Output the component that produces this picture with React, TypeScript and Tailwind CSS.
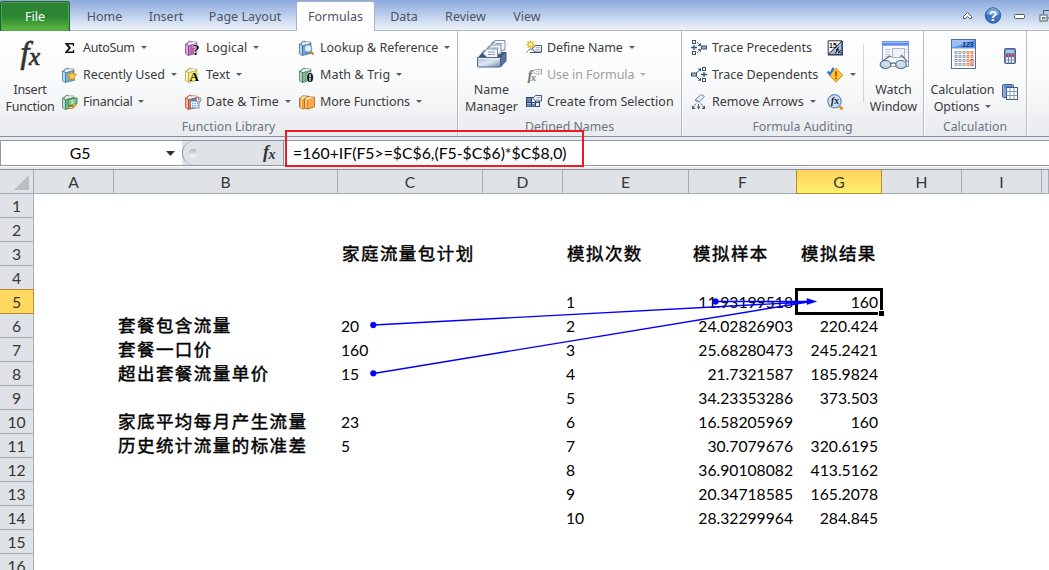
import React from "react";

type Kids = { children?: React.ReactNode };

function Svg({ children, w = 16, h = 16 }: Kids & { w?: number; h?: number }) {
  return (
    <svg width={w} height={h} viewBox={`0 0 ${w} ${h}`} className="shrink-0 overflow-visible">
      {children}
    </svg>
  );
}

function Caret({ dim }: { dim?: boolean }) {
  return (
    <svg width="6" height="3" viewBox="0 0 6 3" className="shrink-0">
      <path d="M0 0h6L3 3z" fill={dim ? "#b4b4b4" : "#5c5c5c"} />
    </svg>
  );
}

function Book({ main, light, dark, children }: Kids & { main: string; light: string; dark: string }) {
  return (
    <Svg>
      <path d="M.5 4 5 1.500 12 2v1.500L3.500 6z" fill="#f3f4f2" stroke={dark} strokeWidth=".5" />
      <path d="M.5 4l3 1.700v9.800l-3-1.800z" fill={light} stroke={dark} strokeWidth=".7" />
      <path d="M3.500 5.700 12 3.500v9.800l-8.500 2.200z" fill={main} stroke={dark} strokeWidth=".6" />
      <path d="M5 6v8.500" stroke={light} strokeWidth=".7" />
      <path d="M2.500 4.500C2.500 1.500 5.500-.3 6.500 2.500" fill="none" stroke={dark} strokeWidth=".7" />
      {children}
    </Svg>
  );
}

const SigmaIcon = () => (
  <Svg>
    <path d="M3 3h9v3h-.8l-.7-1.6H6.2L9 8l-3.2 3.6h4.8l.9-1.8h.7V13H3v-.8L6.5 8 3 3.8z" fill="#111" />
  </Svg>
);
const RecentIcon = () => (
  <Book main="#5ba6d2" light="#b9ddf0" dark="#2f6c96">
    <path d="m9.800 3.900 1.300 3.200 3.600.3-2.700 2.400.8 3.600-3-2-3 2 .8-3.600-2.700-2.400 3.600-.3z" fill="#ffd13b" stroke="#e0791f" strokeWidth=".8" />
  </Book>
);
const FinanceIcon = () => (
  <Book main="#5ba573" light="#b4dcbe" dark="#3c7650">
    <path d="m6 5.500 9-1.700v6L6.200 12z" fill="#7fc48f" stroke="#2f7748" strokeWidth=".8" />
    <path d="M11.500 6C9 5.600 9 7.500 10.500 7.800s1.400 2-1.200 1.800" stroke="#eaffea" fill="none" />
    <ellipse cx="12.300" cy="11" rx="2.400" ry="1" fill="#ffd55a" stroke="#a56b14" strokeWidth=".6" />
    <ellipse cx="9" cy="13.500" rx="2.700" ry="1.100" fill="#ffd55a" stroke="#a56b14" strokeWidth=".6" />
  </Book>
);
const LogicalIcon = () => (
  <Book main="#b45bb0" light="#dcaede" dark="#7c3a80">
    <text x="7.500" y="15" fontSize="14" className="font-['Liberation_Serif',serif] font-bold" fill="#000" stroke="#fff" strokeWidth="1" paintOrder="stroke">?</text>
  </Book>
);
const TextIcon = () => (
  <Book main="#f0e878" light="#fbf8b5" dark="#a89c2b">
    <text x="4.500" y="14" fontSize="13" className="font-['Liberation_Serif',serif] font-bold" fill="#000">A</text>
  </Book>
);
const DateIcon = () => (
  <Book main="#ec6239" light="#f9b497" dark="#a83d1f">
    <rect x="5.500" y="5.500" width="8.500" height="8.500" fill="#fff" stroke="#4a75b8" strokeWidth=".8" />
    <path d="M5.500 6.500H14" stroke="#4f83d1" strokeWidth="2" />
    <path d="M7 9.300h6.500M7 11.300h6.500M7 13h4.500" stroke="#5c86c9" strokeDasharray="1.400 1" />
    <circle cx="13.600" cy="5.600" r="2.500" fill="#f2f4f7" stroke="#616a76" strokeWidth=".8" />
    <path d="M13.600 4v1.800h1.200" stroke="#333" strokeWidth=".7" fill="none" />
  </Book>
);
const LookupIcon = () => (
  <Book main="#4e8fd0" light="#b7d5f1" dark="#2d629c">
    <path d="m11.500 11.500 3 3" stroke="#d38425" strokeWidth="2.400" />
    <circle cx="9" cy="8.500" r="3.700" fill="#d9f0ff" stroke="#8a98a8" strokeWidth="1.200" />
  </Book>
);
const MathIcon = () => (
  <Book main="#6aac86" light="#aed4be" dark="#3b6f52">
    <text x="7.500" y="14.500" fontSize="13.500" className="font-['Liberation_Serif',serif] font-bold" fill="#000" stroke="#fff" strokeWidth=".8" paintOrder="stroke">θ</text>
  </Book>
);
const MoreIcon = () => (
  <Svg>
    <path d="M.5 4.200 4 1.800l5.500.4V12L5 14.800H3.200L.5 13z" fill="#efa03d" stroke="#a8681a" strokeWidth=".8" />
    <path d="M1.300 4.300 3.900 2.400l4.400.2-3.500 2.200z" fill="#fff4df" />
    <path d="M2.500 5.200v9" stroke="#ffd8a0" />
    <path d="m5.500 4.700 3.700-2 6.300.5v9.500l-7 2.600-3-1.700z" fill="#f8a847" stroke="#a8681a" strokeWidth=".8" />
    <path d="m6.300 4.800 3-1.600 5.400.4-6.200 1.900z" fill="#fff4df" />
    <path d="M8.500 5.900V15" stroke="#c27a20" strokeWidth=".7" />
    <path d="M7 5.500v8.300" stroke="#ffd8a0" />
  </Svg>
);

const DefineIcon = () => (
  <Svg>
    <path d="M4.500.5v8M.5 4.500h8M1.600 1.600l5.800 5.800M7.400 1.600 1.600 7.400" stroke="#f0b400" strokeWidth="1.400" />
    <circle cx="4.500" cy="4.500" r="1.800" fill="#fffbd0" />
    <path d="M.5 12.500C4 8 4.500 9.500 7 9" fill="none" stroke="#52688b" />
    <path d="M9 5.500 6.500 8.500 9 12h6.500V5.500z" fill="#f5f8fc" stroke="#3f5a80" />
    <path d="M9.500 7.700h4.500M9.500 9.800h4.500" stroke="#8196b4" strokeWidth=".8" />
    <path d="M4 12.500h11" stroke="#3f5a80" />
  </Svg>
);
const UseIcon = () => (
  <Svg>
    <text x="1.500" y="12.500" fontSize="15" className="font-['Liberation_Serif',serif] font-bold italic" fill="#777">f</text>
    <text x="5" y="14" fontSize="10" className="font-['Liberation_Serif',serif] font-bold italic" fill="#777">x</text>
    <path d="M9.500 2.500 7 4.500 9.500 7H15.500V2.500z" fill="#fafafa" stroke="#a9a9a9" />
    <path d="M10 4.700h4.500" stroke="#b5b5b5" strokeWidth=".8" />
  </Svg>
);
const CreateIcon = () => (
  <Svg>
    <rect x=".5" y="3.500" width="13" height="9" fill="#e9f0fa" stroke="#2d476f" />
    <path d="M1 4h5v4H1zM1 9.500h4v3H1zM6 9.500h4v3H6z" fill="#6783b0" />
    <path d="M.5 8.500h13M5.500 3.500v9M9.500 3.500v9" stroke="#2d476f" />
    <path d="M9.500 1.500 7 4.300 9.500 7h6V1.500z" fill="#f5f8fc" stroke="#3f5a80" />
    <path d="M10.500 3.500h4M10.500 5.300h3" stroke="#8196b4" strokeWidth=".8" />
  </Svg>
);
const PrecedentsIcon = () => (
  <Svg>
    <g fill="#fff" stroke="#335279">
      <rect x="1.500" y=".5" width="3" height="3" />
      <rect x="1.500" y="11.500" width="3" height="3" />
      <rect x="10.500" y="6" width="5" height="3" fill="#9bb2cd" />
    </g>
    <path d="M0 7.500h6M3 5v5" stroke="#335279" strokeWidth="1.300" />
    <path d="m6 2 3 3M6 13l3-3" stroke="#333" strokeWidth=".9" strokeDasharray="2 .7" />
    <path d="M9.800 2.500v3.500H6.500zM9.800 12.500V9H6.500z" fill="#335279" />
  </Svg>
);
const DependentsIcon = () => (
  <Svg>
    <g fill="#fff" stroke="#335279">
      <rect x="11.500" y=".5" width="3" height="3" />
      <rect x="11.500" y="11.500" width="3" height="3" />
      <rect x=".5" y="6" width="5" height="3" fill="#9bb2cd" />
    </g>
    <path d="M10 7.500h6M13 5v5" stroke="#335279" strokeWidth="1.300" />
    <path d="m5.500 6 3-3M5.500 9.500l3 3" stroke="#333" strokeWidth=".9" />
    <path d="M6.800 1.500H10v3.300zM6.800 13.800H10v-3.300z" fill="#335279" />
  </Svg>
);
const RemoveIcon = () => (
  <Svg>
    <path d="m4 6 5.500-5Q12 .2 13.300 2.300L8.500 8Q6 8.500 4 6z" fill="#e8eef8" stroke="#6c80a8" strokeWidth=".9" />
    <path d="M4 6q2.500-.3 4.500 2" fill="none" stroke="#6c80a8" />
    <path d="m5 9.500-3 4M7.500 10v4M10 9.500l3 4" stroke="#3c5374" strokeWidth=".9" strokeDasharray="2 .6" />
    <path d="M1 11.500v3.500h3.500zM5.800 12.500h3.600l-1.800 3zM14 11.500v3.500h-3.500z" fill="#3c5374" />
  </Svg>
);
const ShowIcon = () => (
  <Svg>
    <rect x="1" y=".5" width="14" height="14" fill="#a8b7cb" />
    <path d="M1 .5h14L1 14.500z" fill="#fff" />
    <path d="M1.200 14.500V.8H15" stroke="#333" fill="none" />
    <path d="M1 14.800h15M15.200 1v14" stroke="#1e3f70" strokeWidth="1.500" />
    <path d="M15 1 1 14.500" stroke="#223" />
    <text x="2" y="7.500" fontSize="7" className="font-['Liberation_Sans',sans-serif] font-bold" fill="#111">15</text>
    <path d="M8 13.200q1.700.3 2.200-4 .4-1.800 1.500-1.500M9 9.800H12M11.300 10.500l2.400 2.800M13.900 10.500l-3 2.800" fill="none" stroke="#111" strokeWidth="1" />
  </Svg>
);
const ErrorIcon = () => (
  <Svg>
    <path d="m9 1.300 6.700 6.900L9 15.200 2.200 8.200z" fill="#ffc928" stroke="#c08410" strokeWidth=".9" />
    <path d="M9 4.300v5.200" stroke="#d8321e" strokeWidth="1.800" />
    <circle cx="9" cy="11.600" r="1" fill="#d8321e" />
    <path d="M.6 4.500 3 7.200 6.500.8" fill="none" stroke="#3c6fc4" strokeWidth="2.200" />
  </Svg>
);
const EvaluateIcon = () => (
  <Svg>
    <path d="m12.500 12.500 3 2.800" stroke="#e08a20" strokeWidth="2.600" />
    <circle cx="7.500" cy="7.300" r="6.600" fill="#c9e2fa" stroke="#6d8fc0" strokeWidth="1.300" />
    <text x="4" y="10.300" fontSize="9.500" className="font-['Liberation_Serif',serif] font-bold italic" fill="#111">fx</text>
  </Svg>
);

const ManagerIcon = () => (
  <Svg w={32} h={32}>
    <defs>
      <linearGradient id="drawer" x2="1" y2="1">
        <stop offset="0" stopColor="#a9bcd8" />
        <stop offset=".5" stopColor="#dfe7f2" />
        <stop offset="1" stopColor="#6f88ad" />
      </linearGradient>
    </defs>
    <path d="m1.500 19 5-6h23.500l-5.500 6z" fill="#3f5779" />
    <g fill="#f5f7fb" stroke="#71859f" strokeWidth=".9">
      <path d="M18.500 1.500H29V11l-9 1-4.500-5z" />
      <path d="M14.500 6H25v9H14.500L11 11z" />
      <path d="M11 10h10.500v8.500H11L7 14.500z" />
    </g>
    <path d="M19.500 4.500h7M15.500 9h7.500M12 13h7M12 15.500h7" stroke="#8a9bb1" />
    <path d="M19 3.500q-3-1.500-4 2M15 8q-3-2-4 2M10 12q-3-2-4 2" fill="none" stroke="#667c98" />
    <path d="M1.500 18.500h23V27q0 1-1 1h-21q-1 0-1-1z" fill="url(#drawer)" stroke="#4f688e" />
    <path d="m24.500 18.500 5.500-5.500v9l-5.500 6z" fill="#5c7499" stroke="#435d83" />
    <path d="M2.500 19.500h21" stroke="#e7eef8" />
  </Svg>
);
const WatchIcon = () => (
  <Svg w={32} h={32}>
    <rect x="4.500" y="2.500" width="26" height="25" fill="#fbfcfe" stroke="#8097c4" />
    <path d="M4.500 4.500h26" stroke="#5f8ff0" strokeWidth="4.500" />
    <path d="M5 3.500h25" stroke="#a7c4fb" />
    <path d="M7 10.500h5M7 13h5M7 15.500h5M7 18h5M27.500 10.500h2M27.500 13h2" stroke="#b3bfcf" />
    <rect x="14.500" y="9.500" width="12" height="9" fill="#eef1f7" stroke="#aab7cb" />
    <path d="m3.500 23 8-6 2 1M29.500 23 24 16.500l-2 1" fill="none" stroke="#65758c" strokeWidth="1.200" />
    <ellipse cx="7.500" cy="25.500" rx="5.300" ry="4" fill="#c4dae9" fillOpacity=".9" stroke="#566c84" strokeWidth="1.200" />
    <ellipse cx="23" cy="25.500" rx="5.300" ry="4" fill="#c4dae9" fillOpacity=".9" stroke="#566c84" strokeWidth="1.200" />
    <path d="M12.800 25q2.500-2.500 5 0" fill="none" stroke="#566c84" strokeWidth="1.200" />
  </Svg>
);
const dots = [0, 1, 2, 3];
const CalcIcon = () => (
  <Svg w={32} h={32}>
    <rect x="4.500" y=".5" width="24" height="29" fill="#fff" stroke="#4a70a8" />
    <path d="M5 1h23v8.500H5z" fill="#6397ec" />
    <path d="M5 1h23L5 8.500z" fill="#9cc0f6" />
    <text x="15" y="8" fontSize="7" className="font-['Liberation_Sans',sans-serif] font-bold italic" fill="#173463">123</text>
    {dots.map((r) =>
      dots.map((c) => (
        <rect key={`${r}${c}`} x={8 + c * 4} y={12.5 + r * 4} width="2" height="2" fill="#fff" stroke={c === 3 ? "#e77b3f" : "#8f9cb0"} strokeWidth=".9" />
      )),
    )}
    <rect x="24" y="12.500" width="2" height="2" fill="#fff" stroke="#e77b3f" strokeWidth=".9" />
    <rect x="24" y="16.500" width="2" height="2" fill="#fff" stroke="#e77b3f" strokeWidth=".9" />
    <rect x="24" y="20.500" width="2" height="6" fill="#fff" stroke="#cf3326" strokeWidth=".9" />
  </Svg>
);
const CalcNow = () => (
  <Svg>
    <rect x="2.500" y=".5" width="11" height="15" rx="1" fill="#7187ad" stroke="#4a628b" />
    <rect x="4" y="2" width="8" height="3" fill="#9fc3fb" />
    {dots.slice(0, 3).map((r) =>
      dots.slice(0, 3).map((c) => (
        <rect key={`${r}${c}`} x={4 + c * 3} y={6.5 + r * 3} width="2" height="2" fill={r === 0 ? "#d92f35" : "#fff"} />
      )),
    )}
  </Svg>
);
const CalcSheet = () => (
  <Svg>
    <rect x=".5" y=".5" width="11" height="13" rx="1" fill="#8fa7cd" stroke="#4a628b" />
    <path d="M2 2.500h8" stroke="#5085e0" strokeWidth="2" />
    <rect x="4.500" y="3.500" width="11" height="12" fill="#fff" stroke="#435b83" />
    <path d="M4.500 7.500h11M4.500 11.500h11M8 4v11.500M12 4v11.500" stroke="#8297b9" />
  </Svg>
);

const ui = "font-['Noto_Sans','Open_Sans',sans-serif]";

function Command({ icon, label, track = "", caret, dim }: { icon: React.ReactNode; label: string; track?: string; caret?: boolean; dim?: boolean }) {
  return (
    <div className={`flex h-[27px] items-center whitespace-nowrap ${dim ? "text-[#a0a0a0]" : ""}`}>
      {icon}
      <span className={`ml-[5px] pt-px ${track}`}>{label}</span>
      {caret && <span className="ml-1.5 flex"><Caret dim={dim} /></span>}
    </div>
  );
}

function Group({ label, width, children }: Kids & { label: string; width: string }) {
  return (
    <section className={`flex shrink-0 flex-col border-r border-[#b7bcc4] shadow-[1px_0_0_#fff] ${width}`}>
      <div className="flex h-[84px] pt-[3px]">{children}</div>
      <div className="flex h-[21px] items-center justify-center pt-[3px] text-[12.300px] text-[#6d7480]">{label}</div>
    </section>
  );
}

function BigButton({ icon, lines, width, caret, track = "" }: { icon: React.ReactNode; lines: string[]; width: string; caret?: boolean; track?: string }) {
  return (
    <div className={`flex shrink-0 flex-col items-center pt-[5px] ${width}`}>
      <div className="flex h-[42px] items-start">{icon}</div>
      <div className={`text-center leading-[17px] whitespace-nowrap ${track}`}>
        <div>{lines[0]}</div>
        <div className="flex items-center justify-center gap-1.5">{lines[1]}{caret && <Caret />}</div>
      </div>
    </div>
  );
}

const tabs = [
  { name: "Home", width: "w-[69px]" },
  { name: "Insert", width: "w-[54px]" },
  { name: "Page Layout", width: "w-[103px] pl-px" },
  { name: "Formulas", width: "w-[79px]", active: true },
  { name: "Data", width: "w-[58px]" },
  { name: "Review", width: "w-[65px]" },
  { name: "View", width: "w-[58px]" },
];

const gridCols = "grid grid-rows-[24px] grid-cols-[34px_80px_224px_145px_80px_126px_108px_85px_80px_80px_7px]";
const columns = ["A", "B", "C", "D", "E", "F", "G", "H", "I", ""];

type Row = { b?: string; c?: string; e?: string; f?: string; g?: string; heading?: boolean };
const rows: Row[] = [
  {},
  {},
  { c: "家庭流量包计划", e: "模拟次数", f: "模拟样本", g: "模拟结果", heading: true },
  {},
  { e: "1", f: "11.93199518", g: "160" },
  { b: "套餐包含流量", c: "20", e: "2", f: "24.02826903", g: "220.424" },
  { b: "套餐一口价", c: "160", e: "3", f: "25.68280473", g: "245.2421" },
  { b: "超出套餐流量单价", c: "15", e: "4", f: "21.7321587", g: "185.9824" },
  { e: "5", f: "34.23353286", g: "373.503" },
  { b: "家底平均每月产生流量", c: "23", e: "6", f: "16.58205969", g: "160" },
  { b: "历史统计流量的标准差", c: "5", e: "7", f: "30.7079676", g: "320.6195" },
  { e: "8", f: "36.90108082", g: "413.5162" },
  { e: "9", f: "20.34718585", g: "165.2078" },
  { e: "10", f: "28.32299964", g: "284.845" },
  {},
  {},
];

const cjk = "font-['Noto_Sans_CJK_SC',sans-serif] text-[17.500px] tracking-[1.450px] leading-[20px] [-webkit-text-stroke:0.450px_#000] pb-[3px] pl-1";

function Cell({ text, heading, right }: { text?: string; heading?: boolean; right?: boolean }) {
  return (
    <div className={`flex h-6 items-center whitespace-nowrap pr-1 ${right && !heading ? "justify-end" : ""} ${heading ? cjk : "pl-[3px] leading-[22px]"}`}>
      {text}
    </div>
  );
}

export default function App() {
  return (
    <div className={`relative flex h-[570px] w-[1049px] flex-col overflow-hidden bg-white text-[12.500px] text-[#3b3b3b] ${ui}`}>
      <header className="flex h-[31px] shrink-0 items-end bg-linear-to-b from-[#8aa9dc] via-[#bdd0ed] to-[#f3f6fb]">
        <div className="flex h-[30px] w-[70px] shrink-0 items-center justify-center rounded-t-[3px] border border-b-0 border-[#1b642b] bg-linear-to-b from-[#2d8236] via-[#2b8632] to-[#5dbb45] text-white shadow-[inset_0_0_0_1px_#51a34e]">
          <span className="pt-px">File</span>
        </div>
        <nav className="flex h-[30px] flex-1 items-stretch">
          {tabs.map((t) => (
            <div
              key={t.name}
              className={`flex shrink-0 items-center justify-center whitespace-nowrap text-[#4b5462] ${t.width} ${
                t.active ? "rounded-t-[3px] border border-b-0 border-[#a8b4c6] bg-white pt-[2px]" : "border-b border-[#adb5c2] pt-[4px]"
              }`}
            >
              {t.name}
            </div>
          ))}
          <div className="flex flex-1 items-center justify-end border-b border-[#adb5c2]">
            <svg width="88" height="20" viewBox="0 0 88 20" className="shrink-0">
              <path d="m2.500 10.500 4-4 4 4v2H8.700L6.500 10.400 4.300 12.500H2.500z" fill="#fff" stroke="#505a68" />
              <circle cx="32" cy="9.500" r="7.700" fill="#3f72c1" stroke="#2f5c9f" />
              <path d="M25.500 8a6.500 6 0 0 1 13 0q-6 3-13 0" fill="#72a0de" />
              <text x="27.800" y="14.500" fontSize="14" className="font-['Liberation_Sans',sans-serif] font-bold" fill="#fff">?</text>
              <rect x="53.500" y="8.500" width="10" height="4" rx="1" fill="#fff" stroke="#505a68" />
              <path d="M82.500 8V4.500H90V12h-3.500" fill="none" stroke="#505a68" />
              <rect x="79" y="9" width="7" height="6" fill="#fff" stroke="#505a68" />
              <rect x="81.500" y="11.500" width="2.500" height="1.500" fill="none" stroke="#505a68" strokeWidth=".8" />
            </svg>
          </div>
        </nav>
      </header>

      <div className="flex h-[106px] shrink-0 border-b border-[#8b9097] bg-linear-to-b from-white via-[#f9fafb] to-[#e8ebef]">
        <Group label="Function Library" width="w-[458px]">
          <BigButton
            width="w-[60px]"
            lines={["Insert", "Function"]}
            track="tracking-[-0.250px]"
            icon={
              <Svg w={32} h={32}>
                <text x="6.500" y="23.500" fontSize="32" className="font-['Liberation_Serif',serif] italic" fill="#333" stroke="#333" strokeWidth=".7">f</text>
                <text x="15" y="26" fontSize="25" className="font-['Liberation_Serif',serif] italic" fill="#333" stroke="#333" strokeWidth=".7">x</text>
              </Svg>
            }
          />
          <div className="ml-0.5 w-[123px]">
            <Command icon={<SigmaIcon />} label="AutoSum" track="tracking-[-0.350px]" caret />
            <Command icon={<RecentIcon />} label="Recently Used" track="tracking-[-0.080px]" caret />
            <Command icon={<FinanceIcon />} label="Financial" track="tracking-[-0.250px]" caret />
          </div>
          <div className="w-[114px]">
            <Command icon={<LogicalIcon />} label="Logical" caret />
            <Command icon={<TextIcon />} label="Text" caret />
            <Command icon={<DateIcon />} label="Date & Time" track="tracking-[0.050px]" caret />
          </div>
          <div>
            <Command icon={<LookupIcon />} label="Lookup & Reference" caret />
            <Command icon={<MathIcon />} label="Math & Trig" track="tracking-[0.150px]" caret />
            <Command icon={<MoreIcon />} label="More Functions" track="tracking-[-0.080px]" caret />
          </div>
        </Group>
        <Group label="Defined Names" width="w-[224px]">
          <BigButton width="w-[67px]" lines={["Name", "Manager"]} icon={<ManagerIcon />} />
          <div className="ml-px">
            <Command icon={<DefineIcon />} label="Define Name" track="tracking-[-0.120px]" caret />
            <Command icon={<UseIcon />} label="Use in Formula" track="tracking-[-0.080px]" caret dim />
            <Command icon={<CreateIcon />} label="Create from Selection" />
          </div>
        </Group>
        <Group label="Formula Auditing" width="w-[242px]">
          <div className="ml-[9px] w-[136px]">
            <Command icon={<PrecedentsIcon />} label="Trace Precedents" />
            <Command icon={<DependentsIcon />} label="Trace Dependents" />
            <Command icon={<RemoveIcon />} label="Remove Arrows" caret />
          </div>
          <div className="w-[36px]">
            <div className="flex h-[27px] items-center"><ShowIcon /></div>
            <div className="flex h-[27px] items-center gap-[7px]"><ErrorIcon /><Caret /></div>
            <div className="flex h-[27px] items-center"><EvaluateIcon /></div>
          </div>
          <div className="mt-2.5 h-[58px] w-px bg-[#d0d3d8]" />
          <BigButton width="w-[59px]" lines={["Watch", "Window"]} icon={<WatchIcon />} />
        </Group>
        <Group label="Calculation" width="w-[103px]">
          <BigButton width="w-[77px]" lines={["Calculation", "Options"]} track="tracking-[-0.120px]" icon={<CalcIcon />} caret />
          <div className="ml-px flex flex-col gap-5 pt-[14px]">
            <CalcNow />
            <CalcSheet />
          </div>
        </Group>
      </div>

      <div className="flex h-[33px] shrink-0 flex-col border-b border-[#8b9097] bg-[#e8ebf3] pt-[3px]">
        <div className="flex h-[26px] border-y border-[#8f96a1] bg-[#dfe3e8] font-['Lato',sans-serif] text-[15.800px] leading-[22px] text-black">
          <div className="flex w-[182px] items-center border-l border-[#8f96a1] bg-white">
            <span className="w-[158px] text-center">G5</span>
            <svg width="9" height="5" viewBox="0 0 9 5" className="ml-[7px]"><path d="M0 0h9L4.500 5z" fill="#333" /></svg>
          </div>
          <div className="flex w-[101px] items-center justify-between rounded-l-full border-l border-[#8f96a1] px-1.5">
            <span className="h-2 w-2 rounded-full bg-linear-to-b from-[#b0b4ba] to-white" />
            <svg width="16" height="18" viewBox="0 0 16 18" className="overflow-visible">
              <text x="2" y="13.500" fontSize="18" className="font-['Liberation_Serif',serif] font-bold italic" fill="#333">f</text>
              <text x="7.500" y="15" fontSize="14" className="font-['Liberation_Serif',serif] font-bold italic" fill="#333">x</text>
            </svg>
          </div>
          <div className="flex flex-1 items-center border-l border-[#8f96a1] bg-white pl-[9px]">=160+IF(F5&gt;=$C$6,(F5-$C$6)*$C$8,0)</div>
        </div>
        <div className="h-px bg-white" />
      </div>

      <main className="relative flex-1 overflow-hidden font-['Lato','Noto_Sans_CJK_SC',sans-serif] text-[15.700px] text-black">
        <div className={`${gridCols} h-6 bg-[#dfe2e7] leading-[20px] text-[#363636]`}>
          <div className="flex items-end justify-end border-r border-b border-[#a6adb5] pr-1 pb-[3px]">
            <svg width="15" height="15" viewBox="0 0 15 15"><path d="M15 0v15H0z" fill="#b9bec4" /></svg>
          </div>
          {columns.map((c, i) => (
            <div
              key={i}
              className={`flex items-center justify-center border-r border-b ${
                c === "G" ? "border-[#c08a2c] bg-linear-to-b from-[#ffd25a] to-[#fff06e] shadow-[-1px_0_0_#c08a2c]" : "border-[#a6adb5]"
              }`}
            >
              {c}
            </div>
          ))}
        </div>
        {rows.map((r, i) => (
          <div key={i} className={`${gridCols} h-6`}>
            <div
              className={`flex items-center justify-center border-r border-b leading-[20px] text-[#363636] ${
                i === 4 ? "border-[#c08a2c] bg-[#ffd95f] shadow-[0_-1px_0_#c08a2c]" : "border-[#a6adb5] bg-[#dfe2e7]"
              }`}
            >
              {i + 1}
            </div>
            <div />
            <Cell text={r.b} heading />
            <Cell text={r.c} heading={r.heading} />
            <div />
            <Cell text={r.e} heading={r.heading} />
            <Cell text={r.f} heading={r.heading} right />
            <Cell text={r.g} heading={r.heading} right />
          </div>
        ))}
      </main>

      <div className="absolute top-[288px] left-[795px] h-[27px] w-[88px] border-[3px] border-black" />
      <div className="absolute top-[310px] left-[878px] h-[7px] w-[7px] border border-white bg-black" />
      <svg width="1049" height="570" viewBox="0 0 1049 570" className="pointer-events-none absolute top-0 left-0">
        <g stroke="#0000ff" strokeWidth="1.400" fill="#0000ff">
          <path d="m373.500 325 434-23M373.500 373.500 808 302M716 301.500h92" />
          <path d="m807 298.500 9.500 3-9.500 3z" strokeWidth=".5" />
          <circle cx="373.300" cy="325" r="2.900" strokeWidth=".5" />
          <circle cx="373.300" cy="373.300" r="2.900" strokeWidth=".5" />
          <circle cx="715.500" cy="301.500" r="2.900" strokeWidth=".5" />
        </g>
      </svg>
      <div className="absolute top-[130px] left-[285px] h-[37px] w-[299px] border-2 border-[#ed1c24]" />
    </div>
  );
}
